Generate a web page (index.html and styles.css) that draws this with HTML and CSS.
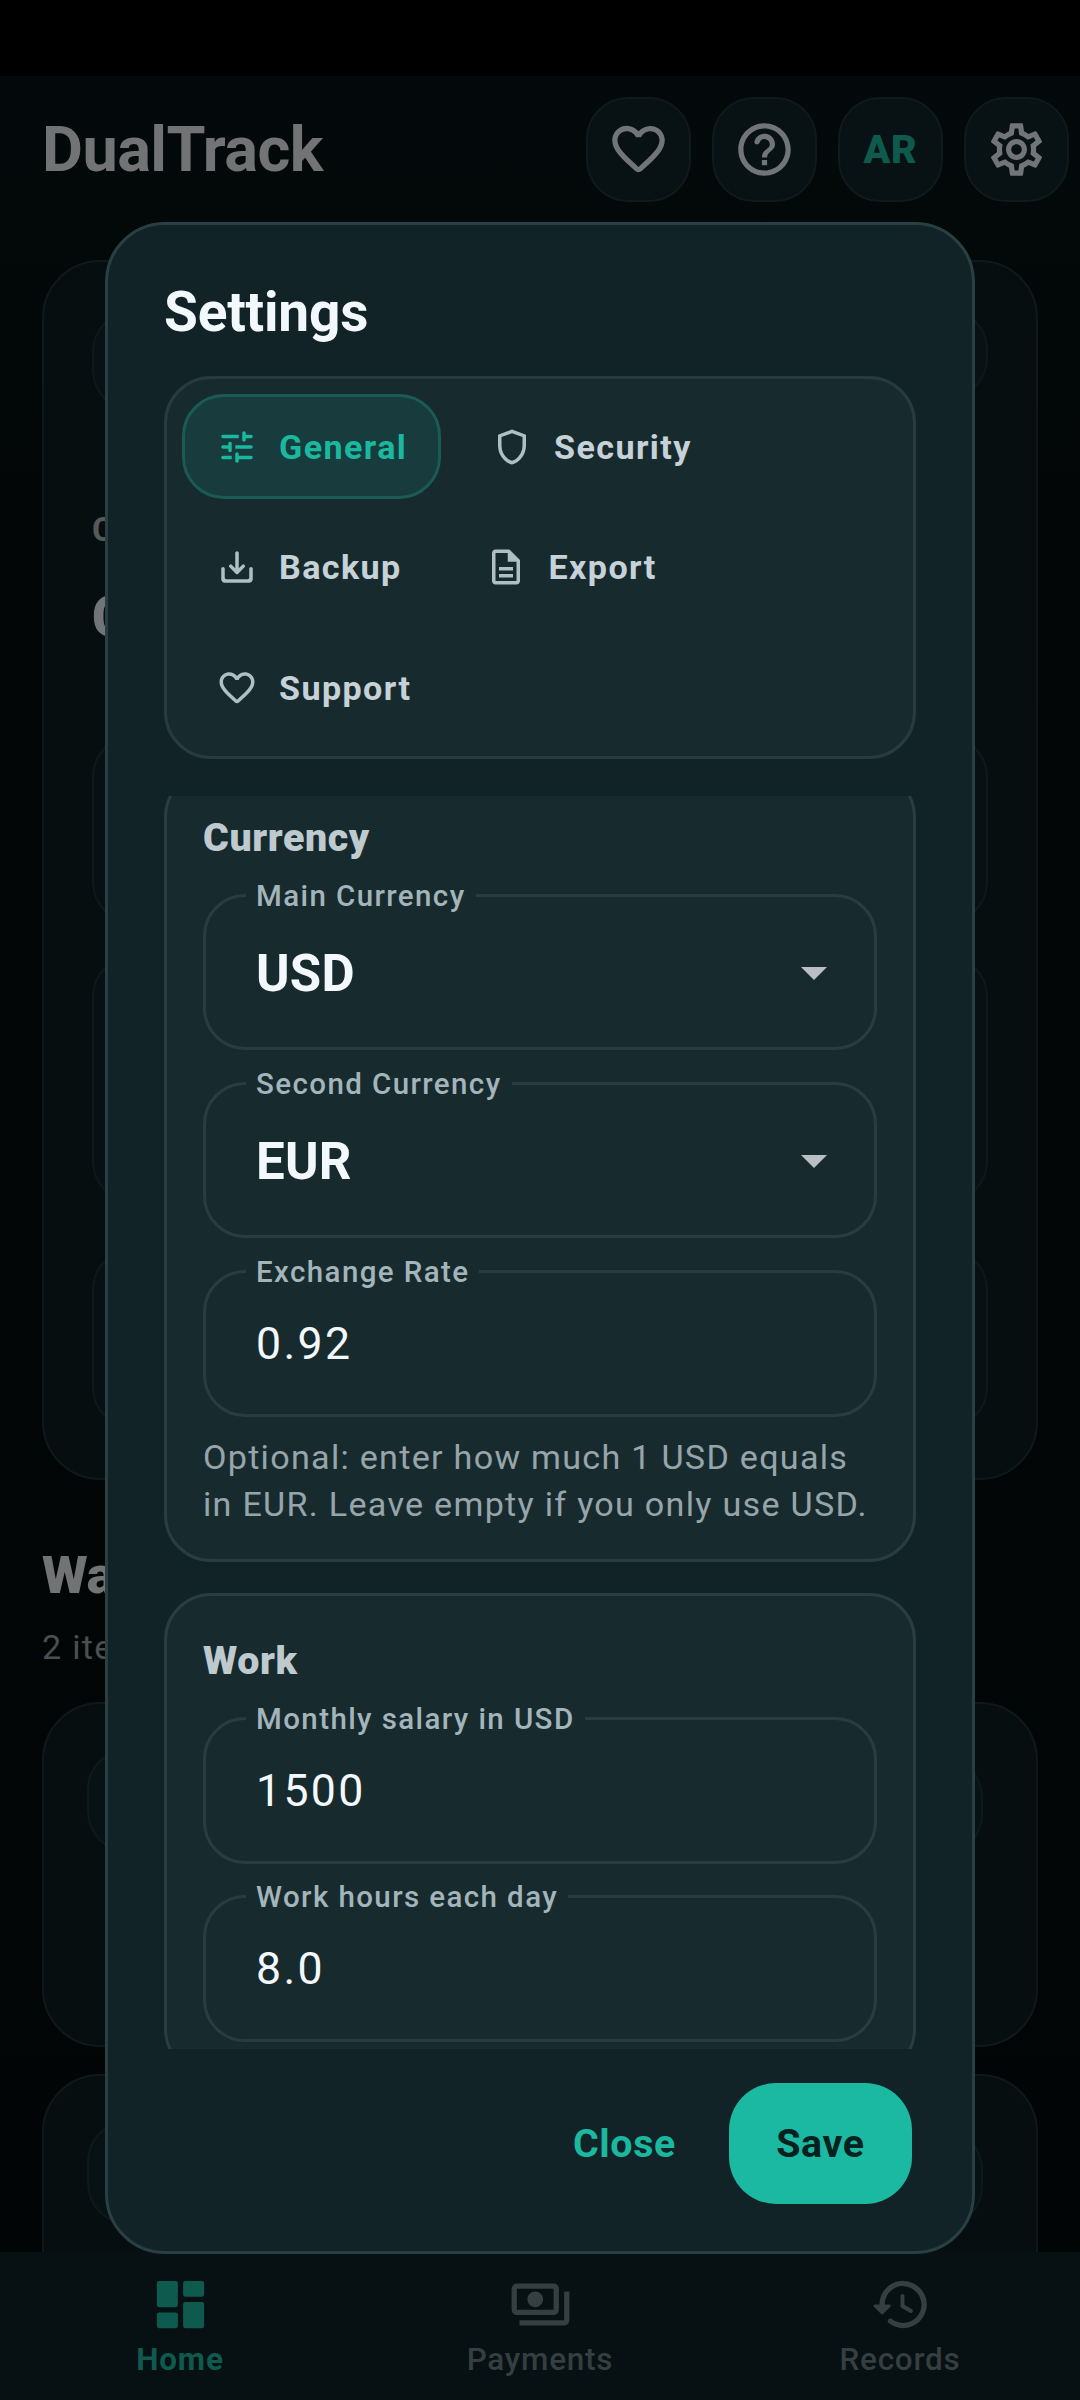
FILE: index.html
```html
<!DOCTYPE html>
<html lang="en">
<head>
<meta charset="utf-8">
<title>DualTrack</title>
<link rel="stylesheet" href="styles.css">
</head>
<body>
<svg class="sprite" aria-hidden="true">
  <symbol id="heart" viewBox="0 0 24 24"><path d="M19.66 3.99c-2.64-1.8-5.9-.96-7.66 1.1-1.76-2.06-5.02-2.91-7.66-1.1-1.4.96-2.28 2.58-2.34 4.29-.14 3.88 3.3 6.99 8.55 11.76l.1.09c.76.69 1.93.69 2.69-.01l.11-.1c5.25-4.76 8.68-7.87 8.55-11.75-.06-1.7-.94-3.32-2.34-4.28zM12.1 18.55l-.1.1-.1-.1C7.14 14.24 4 11.39 4 8.5 4 6.5 5.5 5 7.5 5c1.54 0 3.04.99 3.57 2.36h1.87C13.46 5.99 14.96 5 16.5 5c2 0 3.5 1.5 3.5 3.5 0 2.89-3.14 5.74-7.9 10.05z"/></symbol>
  <symbol id="help" viewBox="0 0 24 24"><path d="M11 16h2v2h-2zm1.61-9.96c-2.06-.3-3.88.97-4.43 2.79-.18.58.26 1.17.87 1.17h.2c.41 0 .74-.29.88-.67.32-.89 1.27-1.5 2.3-1.28.95.2 1.65 1.13 1.57 2.1-.1 1.34-1.62 1.63-2.45 2.88 0 .01-.01.01-.01.02-.01.02-.02.03-.03.05-.09.15-.18.32-.25.5-.01.03-.03.05-.04.08-.01.02-.01.04-.02.07-.12.34-.2.75-.2 1.25h2c0-.42.11-.77.28-1.07.02-.03.03-.06.05-.09.08-.14.18-.27.28-.39.01-.01.02-.03.03-.04.1-.12.21-.23.33-.34.96-.91 2.26-1.65 1.99-3.56-.24-1.74-1.61-3.21-3.35-3.47zM12 2C6.48 2 2 6.48 2 12s4.48 10 10 10 10-4.48 10-10S17.52 2 12 2zm0 18c-4.41 0-8-3.59-8-8s3.59-8 8-8 8 3.59 8 8-3.59 8-8 8z"/></symbol>
  <symbol id="gear" viewBox="0 0 24 24"><path d="M19.43 12.98c.04-.32.07-.64.07-.98 0-.34-.03-.66-.07-.98l2.11-1.65c.19-.15.24-.42.12-.64l-2-3.46c-.09-.16-.26-.25-.44-.25-.06 0-.12.01-.17.03l-2.49 1c-.52-.4-1.08-.73-1.69-.98l-.38-2.65C14.46 2.18 14.25 2 14 2h-4c-.25 0-.46.18-.49.42l-.38 2.65c-.61.25-1.17.59-1.69.98l-2.49-1c-.06-.02-.12-.03-.18-.03-.17 0-.34.09-.43.25l-2 3.46c-.13.22-.07.49.12.64l2.11 1.65c-.04.32-.07.65-.07.98 0 .33.03.66.07.98l-2.11 1.65c-.19.15-.24.42-.12.64l2 3.46c.09.16.26.25.44.25.06 0 .12-.01.17-.03l2.49-1c.52.4 1.08.73 1.69.98l.38 2.65c.03.24.24.42.49.42h4c.25 0 .46-.18.49-.42l.38-2.65c.61-.25 1.17-.59 1.69-.98l2.49 1c.06.02.12.03.18.03.17 0 .34-.09.43-.25l2-3.46c.12-.22.07-.49-.12-.64l-2.11-1.65zm-1.98-1.71c.04.31.05.52.05.73 0 .21-.02.43-.05.73l-.14 1.13.89.7 1.08.84-.7 1.21-1.27-.51-1.04-.42-.9.68c-.43.32-.84.56-1.25.73l-1.06.43-.16 1.13-.2 1.35h-1.4l-.19-1.35-.16-1.13-1.06-.43c-.43-.18-.83-.41-1.23-.71l-.91-.7-1.06.43-1.27.51-.7-1.21 1.08-.84.89-.7-.14-1.13c-.03-.31-.05-.54-.05-.74s.02-.43.05-.73l.14-1.13-.89-.7-1.08-.84.7-1.21 1.27.51 1.04.42.9-.68c.43-.32.84-.56 1.25-.73l1.06-.43.16-1.13.2-1.35h1.39l.19 1.35.16 1.13 1.06.43c.43.18.83.41 1.23.71l.91.7 1.06-.43 1.27-.51.7 1.21-1.07.85-.89.7.14 1.13zM12 8c-2.21 0-4 1.79-4 4s1.79 4 4 4 4-1.79 4-4-1.79-4-4-4zm0 6c-1.1 0-2-.9-2-2s.9-2 2-2 2 .9 2 2-.9 2-2 2z"/></symbol>
  <symbol id="tune" viewBox="0 0 24 24"><path d="M3 18c0 .55.45 1 1 1h5v-2H4c-.55 0-1 .45-1 1zM3 6c0 .55.45 1 1 1h9V5H4c-.55 0-1 .45-1 1zm10 14v-1h7c.55 0 1-.45 1-1s-.45-1-1-1h-7v-1c0-.55-.45-1-1-1s-1 .45-1 1v4c0 .55.45 1 1 1s1-.45 1-1zM7 10v1H4c-.55 0-1 .45-1 1s.45 1 1 1h3v1c0 .55.45 1 1 1s1-.45 1-1v-4c0-.55-.45-1-1-1s-1 .45-1 1zm14 2c0-.55-.45-1-1-1h-9v2h9c.55 0 1-.45 1-1zm-5-3c.55 0 1-.45 1-1V7h3c.55 0 1-.45 1-1s-.45-1-1-1h-3V4c0-.55-.45-1-1-1s-1 .45-1 1v4c0 .55.45 1 1 1z"/></symbol>
  <symbol id="shield" viewBox="0 0 24 24"><path d="M12 2 4 5v6.09c0 5.05 3.41 9.76 8 10.91 4.59-1.15 8-5.86 8-10.91V5l-8-3zm6 9.09c0 4-2.55 7.7-6 8.83-3.45-1.13-6-4.82-6-8.83V6.31l6-2.12 6 2.12v4.78z"/></symbol>
  <symbol id="save" viewBox="0 0 24 24"><path d="M19 13v5c0 .55-.45 1-1 1H6c-.55 0-1-.45-1-1v-5c0-.55-.45-1-1-1s-1 .45-1 1v6c0 1.100.9 2 2 2h14c1.100 0 2-.9 2-2v-6c0-.55-.45-1-1-1s-1 .45-1 1zm-6-.33 1.880-1.880c.39-.39 1.020-.39 1.410 0 .39.39.39 1.020 0 1.410l-3.590 3.590c-.39.39-1.020.39-1.410 0L7.700 12.200c-.39-.39-.39-1.020 0-1.410.39-.39 1.020-.39 1.410 0L11 12.670V4c0-.55.45-1 1-1s1 .45 1 1v8.670z"/></symbol>
  <symbol id="doc" viewBox="0 0 24 24"><path d="M8 16h8v2H8zm0-4h8v2H8zm6-10H6c-1.100 0-2 .9-2 2v16c0 1.100.89 2 1.990 2H18c1.100 0 2-.9 2-2V8l-6-6zm4 18H6V4h7v5h5v11z"/></symbol>
  <symbol id="caret" viewBox="0 0 26 13"><path d="M0 0h26L13 13z"/></symbol>
  <symbol id="home" viewBox="0 0 24 24"><rect x="3" y="3" width="8" height="10" rx=".8"/><rect x="3" y="15" width="8" height="6" rx=".8"/><rect x="13" y="3" width="8" height="6" rx=".8"/><rect x="13" y="11" width="8" height="10" rx=".8"/></symbol>
  <symbol id="payments" viewBox="0 0 24 24"><path d="M19 14V6c0-1.100-.9-2-2-2H3c-1.100 0-2 .9-2 2v8c0 1.100.9 2 2 2h14c1.100 0 2-.9 2-2zm-2 0H3V6h14v8zm-7-7c-1.660 0-3 1.340-3 3s1.340 3 3 3 3-1.340 3-3-1.340-3-3-3zm13 0v11c0 1.100-.9 2-2 2H4v-2h17V7h2z"/></symbol>
  <symbol id="history" viewBox="0 0 24 24"><path d="M13.26 3C8.170 2.860 4 6.950 4 12H2.210c-.45 0-.67.54-.35.85l2.790 2.800c.2.2.51.2.71 0l2.790-2.800c.31-.31.09-.85-.36-.85H6c0-3.900 3.180-7.050 7.100-7 3.720.05 6.850 3.180 6.900 6.900.05 3.910-3.100 7.100-7 7.100-1.610 0-3.100-.55-4.280-1.480-.4-.31-.96-.28-1.320.08-.42.42-.39 1.130.08 1.490C9 20.290 10.910 21 13 21c5.050 0 9.140-4.170 9-9.260-.13-4.690-4.050-8.610-8.740-8.740zM12.750 8c-.41 0-.75.34-.75.75v3.680c0 .35.19.68.49.86l3.120 1.850c.36.21.82.09 1.030-.26.21-.36.09-.82-.26-1.030l-2.880-1.710v-3.400c0-.4-.34-.74-.75-.74z"/></symbol>
</svg>

<div class="app">
  <div class="status-bar"></div>
  <header class="header">
    <h1 class="brand">DualTrack</h1>
    <div class="header-actions">
      <button class="icon-btn"><svg><use href="#heart"/></svg></button>
      <button class="icon-btn"><svg><use href="#help"/></svg></button>
      <button class="icon-btn lang">AR</button>
      <button class="icon-btn"><svg><use href="#gear"/></svg></button>
    </div>
  </header>

  <main class="page">
    <section class="summary">
      <div class="summary-top"><div class="pill"></div><div class="pill small"></div></div>
      <p class="summary-label">C</p>
      <p class="summary-value">C</p>
      <div class="tile tile-a"></div>
      <div class="tile tile-b"></div>
      <div class="tile tile-c"></div>
    </section>
    <h2 class="list-title">Wallet</h2>
    <p class="list-count">2 items</p>
    <section class="item"><div class="item-icon"></div><div class="item-icon end"></div></section>
    <section class="item"><div class="item-icon"></div><div class="item-icon end"></div></section>
  </main>

  <nav class="nav">
    <a class="nav-item active"><svg><use href="#home"/></svg><span>Home</span></a>
    <a class="nav-item"><svg><use href="#payments"/></svg><span>Payments</span></a>
    <a class="nav-item"><svg><use href="#history"/></svg><span>Records</span></a>
  </nav>

  <div class="dialog" role="dialog">
    <h2 class="dialog-title">Settings</h2>
    <div class="tabs">
      <button class="tab active"><svg><use href="#tune"/></svg>General</button>
      <button class="tab"><svg><use href="#shield"/></svg>Security</button>
      <button class="tab"><svg><use href="#save"/></svg>Backup</button>
      <button class="tab"><svg><use href="#doc"/></svg>Export</button>
      <button class="tab"><svg><use href="#heart"/></svg>Support</button>
    </div>

    <div class="scroll">
      <section class="card scrolled">
        <h3 class="card-title">Currency</h3>
        <div class="field select"><span class="label">Main Currency</span><span class="choice">USD</span><svg class="caret"><use href="#caret"/></svg></div>
        <div class="field select"><span class="label">Second Currency</span><span class="choice">EUR</span><svg class="caret"><use href="#caret"/></svg></div>
        <div class="field"><span class="label">Exchange Rate</span><span class="value">0.92</span></div>
        <p class="hint">Optional: enter how much 1 USD equals<br>in EUR. Leave empty if you only use USD.</p>
      </section>
      <section class="card">
        <h3 class="card-title">Work</h3>
        <div class="field"><span class="label">Monthly salary in USD</span><span class="value">1500</span></div>
        <div class="field"><span class="label">Work hours each day</span><span class="value">8.0</span></div>
      </section>
    </div>

    <div class="actions">
      <button class="btn-text">Close</button>
      <button class="btn-fill">Save</button>
    </div>
  </div>
</div>
</body>
</html>
```
FILE: styles.css
```css
* { box-sizing: border-box; margin: 0; padding: 0; }
body { background: #000; font-family: Roboto, "Liberation Sans", sans-serif; }
button { font: inherit; border: 0; background: none; }
svg { fill: currentColor; display: block; flex: none; }
.sprite { position: absolute; width: 0; height: 0; }

.app {
  position: relative;
  display: flex;
  flex-direction: column;
  width: 1080px;
  height: 2400px;
  overflow: hidden;
  background: linear-gradient(#040a0b, #020607 20%, #020506);
}
.status-bar { flex: none; height: 76px; background: #000; }

/* header */
.header {
  flex: none;
  display: flex;
  align-items: center;
  justify-content: space-between;
  height: 147px;
  padding: 0 11px 0 42px;
}
.brand { font-size: 63px; line-height: 74px; font-weight: 700; letter-spacing: -0.55px; color: #717375; }
.header-actions { display: flex; gap: 21px; }
.icon-btn {
  display: flex;
  align-items: center;
  justify-content: center;
  width: 105px;
  height: 105px;
  border: 2px solid #10191b;
  border-radius: 42px;
  background: #081113;
  color: #717577;
}
.icon-btn svg { width: 63px; height: 63px; }
.lang { color: #0e5a4c; font-size: 39.375px; font-weight: 900; letter-spacing: 0.8px; }

/* page behind the dialog */
.page { flex: 1; min-height: 0; overflow: hidden; padding: 37px 42px 0; }
.summary {
  height: 1220px;
  padding: 48px 48px 0;
  border: 2px solid #0f191b;
  border-radius: 58px;
  background: #060e10;
}
.summary-top { display: flex; justify-content: space-between; height: 104px; }
.pill { width: 300px; height: 102px; border: 2px solid #0f191b; border-radius: 42px; background: #081214; }
.pill.small { width: 120px; height: 92px; margin-top: -2px; }
.summary-label { margin-top: 95px; font-size: 34.125px; line-height: 40px; font-weight: 700; color: #54595b; }
.summary-value { margin-top: 36px; font-size: 55px; line-height: 64px; font-weight: 900; color: #717577; }
.tile { border: 2px solid #0f191b; border-radius: 42px; background: #071114; }
.tile-a { height: 189px; margin-top: 86px; }
.tile-b { height: 248px; margin-top: 31px; }
.tile-c { height: 181px; margin-top: 45px; }
.list-title { margin-top: 64px; font-size: 52.5px; line-height: 62px; font-weight: 900; color: #717375; }
.list-count { margin: 21px 0 35px; font-size: 34.125px; line-height: 40px; letter-spacing: 1.3px; color: #4a4f51; }
.item {
  display: flex;
  justify-content: space-between;
  height: 345px;
  margin-bottom: 27px;
  padding: 44px 53px 0 43px;
  border: 2px solid #0f191b;
  border-radius: 58px;
  background: #060e10;
}
.item-icon { width: 105px; height: 105px; border: 2px solid #0f191b; border-radius: 42px; background: #071214; }
.item-icon.end { height: 100px; margin-top: 8px; }

/* bottom navigation */
.nav { flex: none; display: grid; grid-template-columns: repeat(3, 1fr); height: 148px; background: #071012; }
.nav-item {
  display: flex;
  flex-direction: column;
  align-items: center;
  padding-top: 21px;
  color: #353e40;
  font-size: 31.5px;
  line-height: 37px;
  font-weight: 500;
  letter-spacing: 0.75px;
}
.nav-item svg { width: 63px; height: 63px; margin-bottom: 4.5px; }
.nav-item.active { color: #0e5a4e; font-weight: 700; }

/* dialog */
.dialog {
  position: absolute;
  left: 105px;
  top: 222px;
  width: 870px;
  height: 2032px;
  display: flex;
  flex-direction: column;
  padding: 54px 56px 0;
  border: 3px solid #293f44;
  border-radius: 60px;
  background: #112326;
}
.dialog-title { font-size: 55px; line-height: 66px; font-weight: 700; letter-spacing: -0.2px; color: #f3f8fc; }
.tabs {
  display: flex;
  flex-wrap: wrap;
  gap: 15.75px;
  height: 383px;
  margin-top: 31px;
  padding: 15px 15px 16px;
  border: 3px solid #293b40;
  border-radius: 47px;
  background: #172b2f;
}
.tab {
  display: flex;
  align-items: center;
  gap: 21px;
  height: 105px;
  padding: 0 31px;
  border: 3px solid transparent;
  border-radius: 42px;
  font-size: 34.125px;
  font-weight: 700;
  letter-spacing: 1.4px;
  color: #c7d2d8;
}
.tab svg { width: 42px; height: 42px; color: #b0bfc5; }
.tab.active { color: #1bb8a0; background: #183b3d; border-color: #1b5b53; }
.tab.active svg { color: inherit; }

.scroll { display: flex; flex-direction: column; gap: 31px; height: 1253px; margin-top: 37px; overflow: hidden; }
.card {
  flex: none;
  padding: 42px 36px 31px;
  border: 3px solid #293d42;
  border-radius: 47px;
  background: #172b2f;
}
.card.scrolled { margin-top: -26px; }
.card-title { margin-bottom: 33px; font-size: 39.375px; line-height: 46px; font-weight: 900; letter-spacing: 0.6px; color: #bfcacf; }
.field {
  position: relative;
  display: flex;
  align-items: center;
  justify-content: space-between;
  height: 147px;
  padding: 0 47px 0 50px;
  border: 3px solid #283d41;
  border-radius: 42px;
}
.field.select { height: 156px; padding-top: 3px; }
.field + .field { margin-top: 32px; }
.card:not(.scrolled) .field + .field { margin-top: 31px; }
.label {
  position: absolute;
  left: 40px;
  top: -18px;
  padding: 0 10px;
  font-size: 29.5px;
  line-height: 34px;
  font-weight: 500;
  letter-spacing: 1.4px;
  white-space: nowrap;
  color: #a3b4ba;
  background: #172b2f;
}
.choice { font-size: 51px; line-height: 60px; font-weight: 700; letter-spacing: 0.2px; color: #f3f8fc; }
.value { font-size: 44.6px; line-height: 52px; letter-spacing: 2.35px; color: #f3f8fc; }
.caret { width: 26px; height: 13px; color: #b9bfc5; }
.hint { margin-top: 17px; font-size: 34.125px; line-height: 47.2px; letter-spacing: 1.28px; white-space: nowrap; color: #97a5aa; }

.actions { display: flex; justify-content: flex-end; align-items: center; padding: 34px 4px 0 0; }
.actions button { height: 121px; font-size: 39.375px; font-weight: 700; letter-spacing: 0.65px; }
.btn-text { padding: 0 53px; color: #1bb8a0; }
.btn-fill { width: 183px; border-radius: 47px; background: #1bb9a1; color: #04201f; }
```
